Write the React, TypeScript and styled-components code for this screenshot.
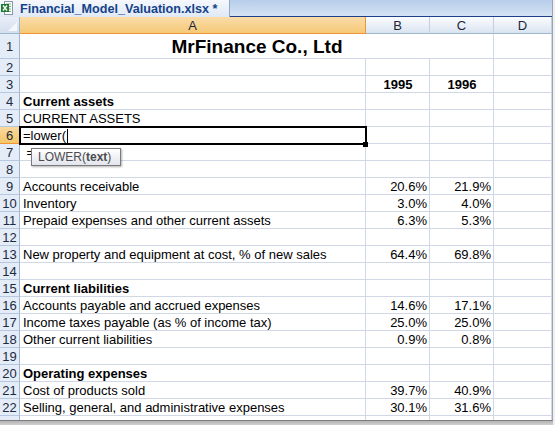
import React from 'react';
import styled, { createGlobalStyle } from 'styled-components';

const GlobalStyle = createGlobalStyle`
  html, body {
    margin: 0;
    padding: 0;
    background: #f0f0f0;
  }
  body {
    font-family: "Liberation Sans", Arial, sans-serif;
  }
`;

const Window = styled.div`
  position: relative;
  width: 552px;
  height: 420px;
  background: #fff;
  border-right: 1px solid #9aa4b2;
  border-bottom: 1px solid #7d7d7d;
  overflow: hidden;
`;

const BottomShade = styled.div`
  width: 553px;
  height: 4px;
  background: linear-gradient(#b4b4b4, #cfcfcf);
`;

const TabBar = styled.div`
  box-sizing: border-box;
  height: 17px;
  display: flex;
  background: linear-gradient(#b7cdea, #d5e3f4);
  border-bottom: 1px solid #1f3f86;
`;

const Tab = styled.div`
  box-sizing: border-box;
  width: 230px;
  height: 17px;
  margin-bottom: -1px;
  display: flex;
  align-items: center;
  gap: 7px;
  padding-left: 1px;
  background: linear-gradient(#f5f8fc, #dfe9f6);
  border-right: 1px solid #8fa7c8;
  color: #15428b;
  font-size: 12.6px;
  font-weight: bold;
  white-space: nowrap;
`;

const Grid = styled.div`
  display: grid;
  grid-template-columns: 20px 346px 64px 64px 58px;
  grid-template-rows: 17px 25px;
  grid-auto-rows: 17px;
`;

const Corner = styled.div`
  position: relative;
  box-sizing: border-box;
  background: linear-gradient(#e9eff8, #d3deed);
  border-right: 1px solid #9eb6ce;
  border-bottom: 1px solid #9eb6ce;

  &::after {
    content: '';
    position: absolute;
    right: 2px;
    bottom: 2px;
    width: 9px;
    height: 9px;
    background: #f4f7fb;
    clip-path: polygon(100% 0, 100% 100%, 0 100%);
  }
`;

const ColHead = styled.div<{ $selected?: boolean }>`
  box-sizing: border-box;
  display: flex;
  align-items: center;
  justify-content: center;
  font-size: 13px;
  color: #1c2738;
  background: ${(p) =>
    p.$selected
      ? 'linear-gradient(#fadcaa, #f5c977)'
      : 'linear-gradient(#fafcfe 0%, #e9eff7 55%, #d9e3f0 100%)'};
  border-right: 1px solid ${(p) => (p.$selected ? '#f29536' : '#c2cfe0')};
  border-bottom: 1px solid ${(p) => (p.$selected ? '#f29536' : '#9eb6ce')};
`;

const RowHead = styled.div<{ $selected?: boolean }>`
  box-sizing: border-box;
  display: flex;
  align-items: center;
  justify-content: center;
  font-size: 13px;
  color: #1c2a42;
  background: ${(p) => (p.$selected ? 'linear-gradient(#f9d99f, #f3c667)' : '#e4ecf7')};
  border-right: 1px solid ${(p) => (p.$selected ? '#f29536' : '#9eb6ce')};
  border-bottom: 1px solid ${(p) => (p.$selected ? '#f29536' : '#b7c8de')};
`;

const Cell = styled.div<{
  $align?: 'left' | 'right' | 'center';
  $bold?: boolean;
  $span?: number;
  $title?: boolean;
  $active?: boolean;
}>`
  position: relative;
  box-sizing: border-box;
  display: flex;
  align-items: flex-end;
  justify-content: ${(p) =>
    p.$align === 'right' ? 'flex-end' : p.$align === 'center' ? 'center' : 'flex-start'};
  grid-column: ${(p) => (p.$span ? `span ${p.$span}` : 'auto')};
  padding: 0 2px 0 3px;
  border-right: 1px solid #d0d7e5;
  border-bottom: 1px solid #d0d7e5;
  font-size: ${(p) => (p.$title ? '19px' : '13px')};
  line-height: ${(p) => (p.$title ? '22px' : '15px')};
  font-weight: ${(p) => (p.$bold || p.$title ? 'bold' : 'normal')};
  color: #000;
  white-space: pre;
  z-index: ${(p) => (p.$active ? 2 : 'auto')};

  ${(p) =>
    p.$active &&
    `
    &::after {
      content: '';
      position: absolute;
      left: -1px;
      top: -1px;
      right: -2px;
      bottom: -2px;
      border: 2px solid #000;
    }
    &::before {
      content: '';
      position: absolute;
      right: -3px;
      bottom: -4px;
      width: 5px;
      height: 5px;
      background: #000;
      z-index: 1;
    }
  `}
`;

const Caret = styled.span`
  display: inline-block;
  width: 1px;
  height: 14px;
  margin-left: 1px;
  margin-bottom: 0px;
  background: #000;
  align-self: flex-end;
`;

const Tip = styled.div`
  position: absolute;
  left: 31px;
  top: 148px;
  box-sizing: border-box;
  height: 18px;
  padding: 0 9px 0 6px;
  display: flex;
  align-items: center;
  border: 1px solid #7a7a7a;
  background: linear-gradient(#ffffff, #e3e5ee);
  color: #4c4c4c;
  font-size: 12px;
  white-space: nowrap;
  box-shadow: 1px 1px 2px rgba(0, 0, 0, 0.3);
  z-index: 3;

  b {
    font-weight: bold;
  }
`;

const ExcelIcon = () => (
  <svg width="12" height="15" viewBox="0 0 12 15">
    <rect x="3.5" y="0.5" width="8" height="13" fill="#fff" stroke="#8a97a8" />
    <path d="M5 3h5M5 5.5h5M5 8h5M5 10.5h5" stroke="#7fb27f" strokeWidth="1" />
    <rect x="0" y="3" width="8" height="8" fill="#1e7b34" />
    <path d="M2 4.5l4 5M6 4.5l-4 5" stroke="#fff" strokeWidth="1.4" />
  </svg>
);

type Row = {
  a?: React.ReactNode;
  b?: string;
  c?: string;
  bold?: boolean;
  center?: boolean;
};

const rows: Row[] = [
  {},
  { b: '1995', c: '1996', bold: true, center: true },
  { a: 'Current assets', bold: true },
  { a: 'CURRENT ASSETS' },
  {},
  { a: ' =' },
  {},
  { a: 'Accounts receivable', b: '20.6%', c: '21.9%' },
  { a: 'Inventory', b: '3.0%', c: '4.0%' },
  { a: 'Prepaid expenses and other current assets', b: '6.3%', c: '5.3%' },
  {},
  { a: 'New property and equipment at cost, % of new sales', b: '64.4%', c: '69.8%' },
  {},
  { a: 'Current liabilities', bold: true },
  { a: 'Accounts payable and accrued expenses', b: '14.6%', c: '17.1%' },
  { a: 'Income taxes payable (as % of income tax)', b: '25.0%', c: '25.0%' },
  { a: 'Other current liabilities', b: '0.9%', c: '0.8%' },
  {},
  { a: 'Operating expenses', bold: true },
  { a: 'Cost of products sold', b: '39.7%', c: '40.9%' },
  { a: 'Selling, general, and administrative expenses', b: '30.1%', c: '31.6%' },
  { a: 'Depreciation as % of prior year net fixed assets', b: '11.8%', c: '11.9%' },
];

const ACTIVE_ROW = 6;

export default function App() {
  return (
    <>
      <GlobalStyle />
      <Window>
        <TabBar>
          <Tab>
            <ExcelIcon />
            <span>Financial_Model_Valuation.xlsx *</span>
          </Tab>
        </TabBar>

        <Grid>
          <Corner />
          <ColHead $selected>A</ColHead>
          <ColHead>B</ColHead>
          <ColHead>C</ColHead>
          <ColHead>D</ColHead>

          <RowHead>1</RowHead>
          <Cell $span={3} $align="center" $title>
            MrFinance Co., Ltd
          </Cell>
          <Cell />

          {rows.map((r, i) => {
            const n = i + 2;
            const active = n === ACTIVE_ROW;
            return (
              <React.Fragment key={n}>
                <RowHead $selected={active}>{n}</RowHead>
                <Cell $bold={r.bold} $active={active}>
                  {active ? (
                    <>
                      =lower(
                      <Caret />
                    </>
                  ) : (
                    r.a
                  )}
                </Cell>
                <Cell $bold={r.bold} $align={r.center ? 'center' : 'right'}>
                  {r.b}
                </Cell>
                <Cell $bold={r.bold} $align={r.center ? 'center' : 'right'}>
                  {r.c}
                </Cell>
                <Cell />
              </React.Fragment>
            );
          })}
        </Grid>

        <Tip>
          LOWER(<b>text</b>)
        </Tip>
      </Window>
      <BottomShade />
    </>
  );
}
